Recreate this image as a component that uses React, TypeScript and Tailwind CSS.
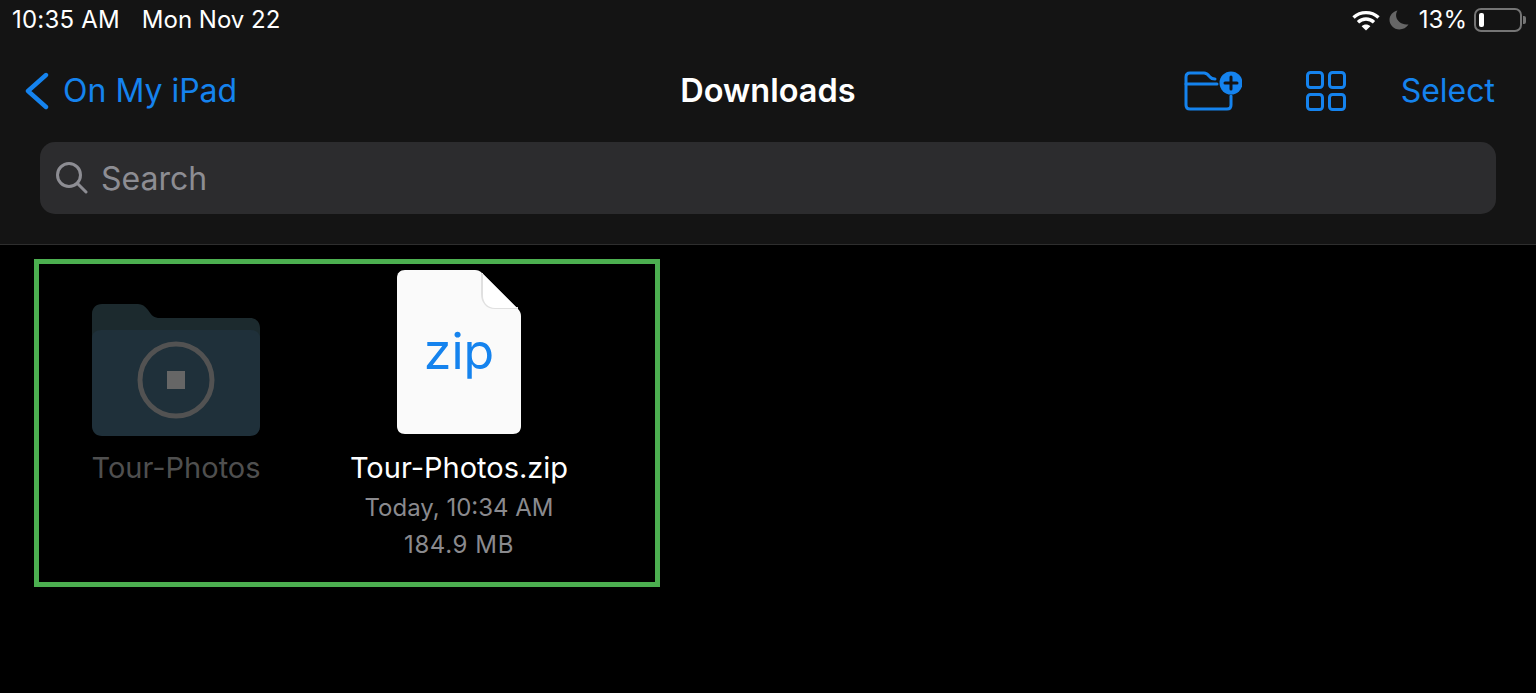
const font = { fontFamily: "Inter, 'Liberation Sans', sans-serif" };

const StatusBar = () => (
  <div className="flex h-[40px] items-center justify-between pl-[12px] pr-[10px] text-[24px] text-white">
    <div className="flex gap-[22px]">
      <span className="tracking-[0.2px]">10:35 AM</span>
      <span>Mon Nov 22</span>
    </div>
    <div className="flex items-center">
      <svg width="28" height="21" viewBox="0 0 28 21" fill="none" stroke="white" strokeWidth="3.4">
        <path d="M1.5 7.5C8.5 1 19.5 1 26.5 7.5" />
        <path d="M6 12.2C10.6 8 17.4 8 22 12.2" />
        <path d="M14 20.5L9.6 16.2C12 14 16 14 18.4 16.2Z" fill="white" stroke="none" />
      </svg>
      <svg className="ml-[9px]" width="20" height="20" viewBox="0 0 20 20">
        <path d="M8.5 0.5C5 6 8 14.5 19.5 14.6C17.500 17.800 14 19.500 10.500 19.500C4.800 19.500 0.500 15 0.500 9.800C0.500 5.400 4 1.400 8.500 0.500Z" fill="#666" />
      </svg>
      <span className="ml-[10px]">13%</span>
      <div className="ml-[7px] flex items-center">
        <div className="flex h-[24px] w-[48px] items-center rounded-[7px] border-2 border-[#757575] pl-[3px]">
          <div className="h-[14px] w-[5px] rounded-[2px] bg-white" />
        </div>
        <div className="ml-[1px] h-[8px] w-[3px] rounded-r-[2px] bg-[#757575]" />
      </div>
    </div>
  </div>
);

const NavBar = () => (
  <div className="grid h-[102px] grid-cols-3 items-center text-[32px] text-[#1583ee]">
    <div className="flex items-center pl-[25px]">
      <svg width="24" height="38" viewBox="0 0 24 38" fill="none" stroke="#1583ee" strokeWidth="4.4" strokeLinecap="round" strokeLinejoin="round">
        <path d="M21 3L3 19L21 35" />
      </svg>
      <span className="ml-[14px]">On My iPad</span>
    </div>
    <div className="text-center text-[32.5px] font-semibold text-white">Downloads</div>
    <div className="flex items-center justify-end pr-[41px]">
      <svg width="58" height="40" viewBox="0 0 58 40" fill="none" stroke="#1583ee" strokeWidth="3" strokeLinecap="round">
        <path d="M47 25V34C47 36.5 45.5 38 43 38H6C3.500 38 2 36.500 2 34V6C2 3.500 3.500 2 6 2H20C23 2 24 3.500 26 6C27.500 8 29 8 31 8" />
        <path d="M2 13H33" />
        <circle cx="47" cy="12" r="11.500" fill="#1583ee" stroke="none" />
        <path d="M47 6V18M41 12H53" stroke="#141414" />
      </svg>
      <svg className="ml-[64px]" width="40" height="40" viewBox="0 0 40 40" fill="none" stroke="#1583ee" strokeWidth="3">
        <rect x="1.500" y="1.500" width="15" height="15" rx="3" />
        <rect x="23.500" y="1.500" width="15" height="15" rx="3" />
        <rect x="1.500" y="23.500" width="15" height="15" rx="3" />
        <rect x="23.500" y="23.500" width="15" height="15" rx="3" />
      </svg>
      <span className="ml-[55px]">Select</span>
    </div>
  </div>
);

const SearchField = () => (
  <div className="mx-[40px] flex h-[72px] items-center rounded-[15px] bg-[#2c2c2e] pl-[16px] text-[32px] text-[#8d8d93]">
    <svg width="32" height="32" viewBox="0 0 32 32" fill="none" stroke="#8d8d93" strokeWidth="3" strokeLinecap="round">
      <circle cx="13" cy="13" r="11.500" />
      <path d="M21.500 21.500L30 30" />
    </svg>
    <span className="ml-[13px] pt-[2px]">Search</span>
  </div>
);

const FolderIcon = () => (
  <svg width="168" height="132" viewBox="0 0 168 132">
    <path d="M0 10C0 4 4 0 10 0H46C50 0 53 2 56 6C60 12 62 14 68 14H158C164 14 168 18 168 24V60H0Z" fill="#1c2a2e" />
    <path d="M0 34C0 29 4 26 9 26H159C164 26 168 29 168 34V122C168 128 164 132 158 132H10C4 132 0 128 0 122Z" fill="#1f303a" />
    <circle cx="84" cy="76" r="36" fill="none" stroke="#525252" strokeWidth="5" />
    <rect x="75" y="67" width="18" height="18" fill="#666666" />
  </svg>
);

const ZipIcon = () => (
  <div className="relative h-[164px] w-[124px]">
    <svg width="124" height="164" viewBox="0 0 124 164" className="block">
      <path d="M0 8C0 3 3 0 8 0H78C81 0 83 1 85 3L120 38C123 41 124 43 124 46V156C124 161 121 164 116 164H8C3 164 0 161 0 156Z" fill="#fafafa" />
      <path d="M85 3V24C85 32 90 38 98 38H121" fill="none" stroke="#e0e0e0" strokeWidth="2" />
      <path d="M86 4L120 38H98C91 38 86 33 86 25Z" fill="#ffffff" />
    </svg>
    <div className="absolute inset-x-0 top-[46px] text-center text-[50px] leading-[70px] font-normal text-[#1583ee]">zip</div>
  </div>
);

export default function App() {
  return (
    <div className="h-[693px] w-[1536px] overflow-hidden bg-black" style={font}>
      <header className="h-[245px] border-b border-[#2e2e2e] bg-[#141414]">
        <StatusBar />
        <NavBar />
        <SearchField />
      </header>
      <main className="pt-[14px] pl-[34px]">
        <div className="flex h-[328px] w-[626px] gap-[63px] border-[5px] border-[#4caf50] pt-[6px] pl-[27px]">
          <div className="flex w-[220px] flex-col items-center">
            <div className="flex h-[166px] items-end">
              <FolderIcon />
            </div>
            <div className="mt-[14px] text-[29px] leading-[36px] text-[#4f4f4f]">Tour-Photos</div>
          </div>
          <div className="flex w-[220px] flex-col items-center">
            <div className="h-[166px]">
              <ZipIcon />
            </div>
            <div className="mt-[14px] text-[29px] leading-[36px] whitespace-nowrap text-white">Tour-Photos.zip</div>
            <div className="mt-[3px] text-[24px] leading-[37px] text-[#8a8a8e]">Today, 10:34 AM</div>
            <div className="text-[24px] leading-[37px] tracking-[0.6px] text-[#8a8a8e]">184.9 MB</div>
          </div>
        </div>
      </main>
    </div>
  );
}
